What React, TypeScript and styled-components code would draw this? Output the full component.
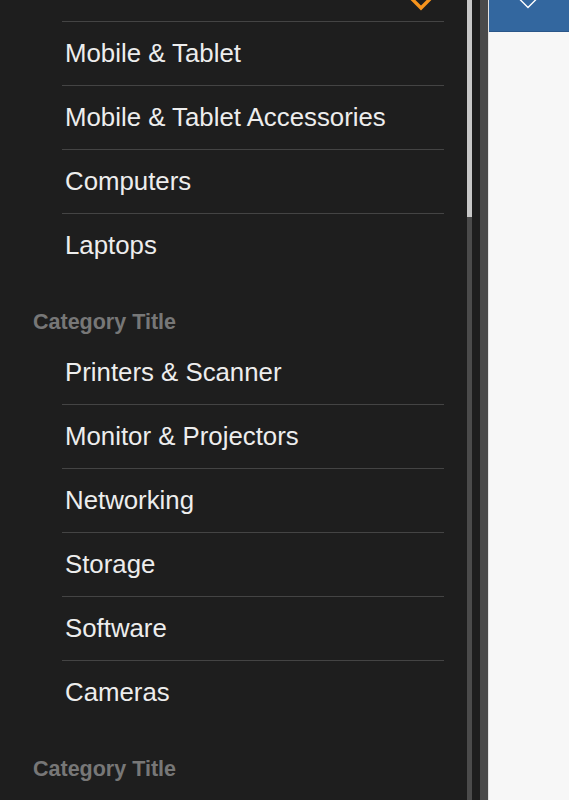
import React from "react";
import styled, { createGlobalStyle } from "styled-components";

const GlobalStyle = createGlobalStyle`
  html, body { margin: 0; padding: 0; background: #f7f7f7; }
  body { font-family: "Liberation Sans", Arial, Helvetica, sans-serif; }
  * { box-sizing: border-box; }
`;

const Page = styled.div`
  display: flex;
  width: 569px;
  height: 800px;
  overflow: hidden;
`;

const Sidebar = styled.aside`
  display: flex;
  width: 480px;
  flex: none;
  background: #1e1e1e;
`;

const MenuViewport = styled.nav`
  flex: 1;
  overflow: hidden;
`;

const Menu = styled.ul`
  list-style: none;
  margin: 0;
  padding: 0;
`;

const Item = styled.li<{ $last?: boolean }>`
  display: flex;
  align-items: center;
  margin-left: 62px;
  width: 382px;
  height: 64px;
  padding-left: 3px;
  border-bottom: ${(p) => (p.$last ? "none" : "1px solid #444444")};
  color: #ededed;
  font-size: 25.8px;
  line-height: 1;
  white-space: nowrap;
`;

const OpenHeader = styled.li`
  display: flex;
  justify-content: flex-end;
  align-items: flex-start;
  margin-left: 62px;
  width: 382px;
  height: 22px;
  padding-right: 11px;
  border-bottom: 1px solid #444444;
`;

const CategoryTitle = styled.li`
  height: 63px;
  padding: 32px 0 7px 33px;
  color: #777777;
  font-size: 21.5px;
  font-weight: 700;
  line-height: 24px;
  white-space: nowrap;
`;

const ScrollTrack = styled.div`
  width: 5px;
  margin-right: 8px;
  background: #4b4b4b;
  display: flex;
  flex-direction: column;
`;

const ScrollThumb = styled.div`
  height: 217px;
  background: #c8c8c8;
`;

const Divider = styled.div`
  width: 8px;
  flex: none;
  background: #4a4a4a;
`;

const Main = styled.main`
  flex: 1;
  background: #f7f7f7;
  border-left: 1px solid #e2e2e2;
`;

const TopBar = styled.div`
  height: 32px;
  background: #33679f;
  border-bottom: 1px solid #2a5689;
  display: flex;
  justify-content: center;
  align-items: flex-start;
  padding-right: 3px;
`;

const Chevron = ({ color, stroke, tip }: { color: string; stroke: number; tip: number }) => (
  <svg width={24} height={14} viewBox="0 0 24 14" style={{ display: "block" }}>
    <polyline
      points={`${12 - tip - 2},-2 12,${tip} ${12 + tip + 2},-2`}
      fill="none"
      stroke={color}
      strokeWidth={stroke}
      strokeLinecap="butt"
      strokeLinejoin="miter"
    />
  </svg>
);

const groups: string[][] = [
  ["Mobile & Tablet", "Mobile & Tablet Accessories", "Computers", "Laptops"],
  ["Printers & Scanner", "Monitor & Projectors", "Networking", "Storage", "Software", "Cameras"],
];

export default function App() {
  return (
    <>
      <GlobalStyle />
      <Page>
        <Sidebar>
          <MenuViewport>
            <Menu>
              <OpenHeader>
                <Chevron color="#f7941d" stroke={3.4} tip={8} />
              </OpenHeader>
              {groups.map((g, gi) => (
                <React.Fragment key={gi}>
                  {gi > 0 && <CategoryTitle>Category Title</CategoryTitle>}
                  {g.map((label, i) => (
                    <Item key={label} $last={i === g.length - 1}>
                      {label}
                    </Item>
                  ))}
                </React.Fragment>
              ))}
              <CategoryTitle>Category Title</CategoryTitle>
            </Menu>
          </MenuViewport>
          <ScrollTrack>
            <ScrollThumb />
          </ScrollTrack>
        </Sidebar>
        <Divider />
        <Main>
          <TopBar>
            <Chevron color="#ffffff" stroke={1.4} tip={7.5} />
          </TopBar>
        </Main>
      </Page>
    </>
  );
}
